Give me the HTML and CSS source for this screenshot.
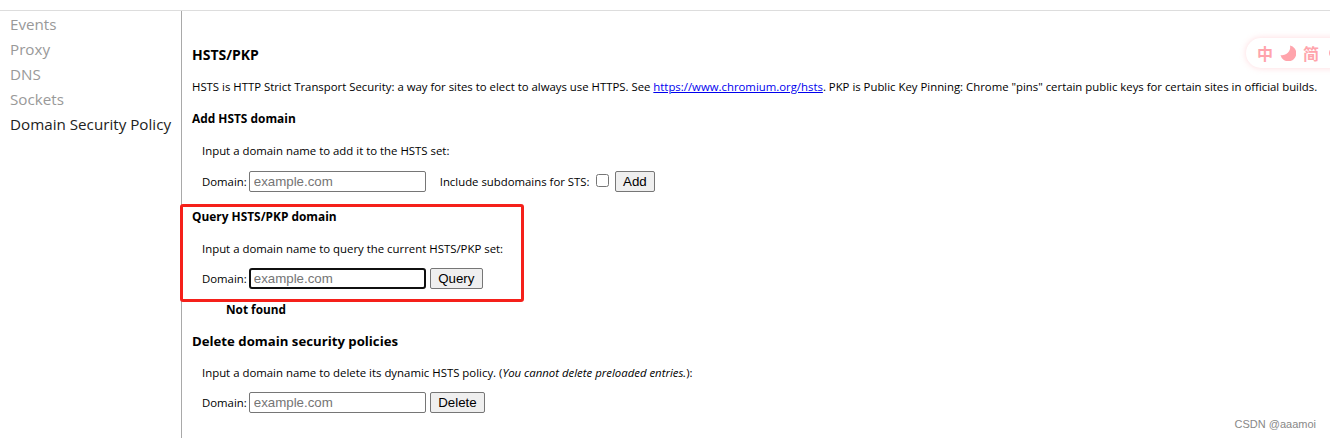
FILE: index.html
```html
<!DOCTYPE html>
<html lang="en">
<head>
    <meta charset="UTF-8">
    <meta name="viewport" content="width=device-width, initial-scale=1.0">
    <title>HSTS/PKP</title>
    <link rel="stylesheet" href="styles.css">
</head>
<body>
    <div class="page">
        <ul class="side-nav">
            <li>Events</li>
            <li>Proxy</li>
            <li>DNS</li>
            <li>Sockets</li>
            <li class="active">Domain Security Policy</li>
        </ul>
        <div class="content">
            <h2 class="page-title">HSTS/PKP</h2>
            <p class="intro">HSTS is HTTP Strict Transport Security: a way for sites to elect to always use HTTPS. See <a href="#">https://www.chromium.org/hsts</a>. PKP is Public Key Pinning: Chrome "pins" certain public keys for certain sites in official builds.</p>

            <h3 class="sub-title add-title">Add HSTS domain</h3>
            <p class="hint">Input a domain name to add it to the HSTS set:</p>
            <div class="form-row">
                <label>Domain:</label>
                <input type="text" class="domain-input" placeholder="example.com">
                <label class="sts-label">Include subdomains for STS:</label>
                <input type="checkbox" class="sts-check">
                <button class="btn">Add</button>
            </div>

            <h3 class="sub-title query-title">Query HSTS/PKP domain</h3>
            <p class="hint">Input a domain name to query the current HSTS/PKP set:</p>
            <div class="form-row tight-row">
                <label>Domain:</label>
                <input type="text" class="domain-input focused" placeholder="example.com">
                <button class="btn">Query</button>
            </div>
            <div class="result">Not found</div>

            <h3 class="delete-title">Delete domain security policies</h3>
            <p class="hint">Input a domain name to delete its dynamic HSTS policy. (<em>You cannot delete preloaded entries.</em>):</p>
            <div class="form-row tight-row">
                <label>Domain:</label>
                <input type="text" class="domain-input" placeholder="example.com">
                <button class="btn">Delete</button>
            </div>
        </div>
    </div>

    <div class="red-box"></div>
    <div class="float-pill">
        <span>中</span>
        <svg class="moon" width="16" height="16" viewBox="0 0 16 16"><path d="M10 .5A8 8 0 1 1 .5 10 8 8 0 0 0 10 .5Z" fill="#ffa4ac"/></svg>
        <span>简</span>
        <span class="pill-more"></span>
    </div>
    <div class="watermark">CSDN @aaamoi</div>
</body>
</html>
```

FILE: styles.css
```css
html, body {
    margin: 0;
    height: 100%;
    overflow: hidden;
}
body {
    font-family: "Open Sans", "Noto Sans CJK SC", sans-serif;
    font-size: 11.37px;
    color: #000;
    background-color: #fff;
}
.page {
    display: flex;
    margin-top: 10px;
    height: 428px;
    border-top: 1px solid #ddd;
}
.side-nav {
    list-style: none;
    margin: 0;
    padding: 1px 0 0 10px;
    width: 171px;
    box-sizing: content-box;
    border-right: 1px solid #a9a9a9;
    font-size: 15.2px;
    line-height: 25px;
    color: #999;
    white-space: nowrap;
}
.side-nav .active {
    color: #222;
}
.content {
    padding: 0 0 0 10px;
    flex: 1;
    min-width: 0;
    white-space: nowrap;
}
.page-title {
    font-size: 14px;
    font-weight: 700;
    line-height: 20px;
    margin: 34px 0 0;
}
.intro {
    margin: 13px 0 0;
    line-height: 17px;
}
.intro a {
    color: #00e;
}
.sub-title {
    font-size: 11.9px;
    font-weight: 700;
    line-height: 17px;
    margin: 0;
}
.add-title {
    margin-top: 15px;
}
.query-title {
    margin-top: 16px;
}
.delete-title {
    font-size: 13.2px;
    font-weight: 700;
    line-height: 20px;
    margin: 13px 0 0;
}
.hint {
    margin: 15px 0 0 10px;
    line-height: 17px;
    font-size: 11.4px;
}
.delete-title + .hint {
    margin-top: 13px;
}
.form-row {
    display: flex;
    align-items: center;
    height: 22px;
    margin: 11px 0 0 10px;
}
.tight-row {
    margin-top: 10px;
}
.domain-input {
    width: 177px;
    height: 21px;
    box-sizing: border-box;
    margin: 0 4px 0 2px;
    padding: 1px 4px;
    border: 1px solid #767676;
    border-radius: 2px;
    font-family: "Liberation Sans", Arial, sans-serif;
    font-size: 13.3px;
    outline: none;
}
.domain-input::placeholder {
    color: #757575;
}
.domain-input.focused {
    border: 2px solid #101010;
    border-radius: 3px;
    padding: 0 3px;
}
.sts-label {
    margin-left: 10px;
}
.sts-check {
    width: 13px;
    height: 13px;
    margin: 0 6px 2px 6px;
}
.btn {
    height: 21px;
    padding: 0 7.5px;
    box-sizing: border-box;
    background-color: #efefef;
    border: 1px solid #767676;
    border-radius: 2px;
    font-family: "Liberation Sans", Arial, sans-serif;
    font-size: 13.3px;
    color: #000;
}
.result {
    margin: 12px 0 0 34px;
    font-size: 11.8px;
    font-weight: 700;
    line-height: 17px;
}
.red-box {
    position: absolute;
    left: 180px;
    top: 204px;
    width: 344px;
    height: 98px;
    box-sizing: border-box;
    border: 3px solid #f5201a;
    border-radius: 3px;
}
.float-pill {
    position: absolute;
    left: 1246px;
    top: 38px;
    width: 110px;
    height: 30px;
    display: flex;
    align-items: center;
    gap: 7px;
    padding-left: 11px;
    box-sizing: border-box;
    background-color: #fff;
    border-radius: 15px;
    box-shadow: 0 0 6px rgba(255, 170, 180, 0.45);
    color: #ffa4ac;
    font-family: "Noto Sans CJK SC", sans-serif;
    font-size: 16px;
    font-weight: 700;
}
.pill-more {
    width: 12px;
    height: 12px;
    margin-left: 3px;
    border-radius: 50%;
    background-color: #ffa4ac;
}
.watermark {
    position: absolute;
    right: 14px;
    top: 417px;
    font-family: "Liberation Sans", Arial, sans-serif;
    font-size: 11px;
    line-height: 14px;
    color: #888;
}
```
